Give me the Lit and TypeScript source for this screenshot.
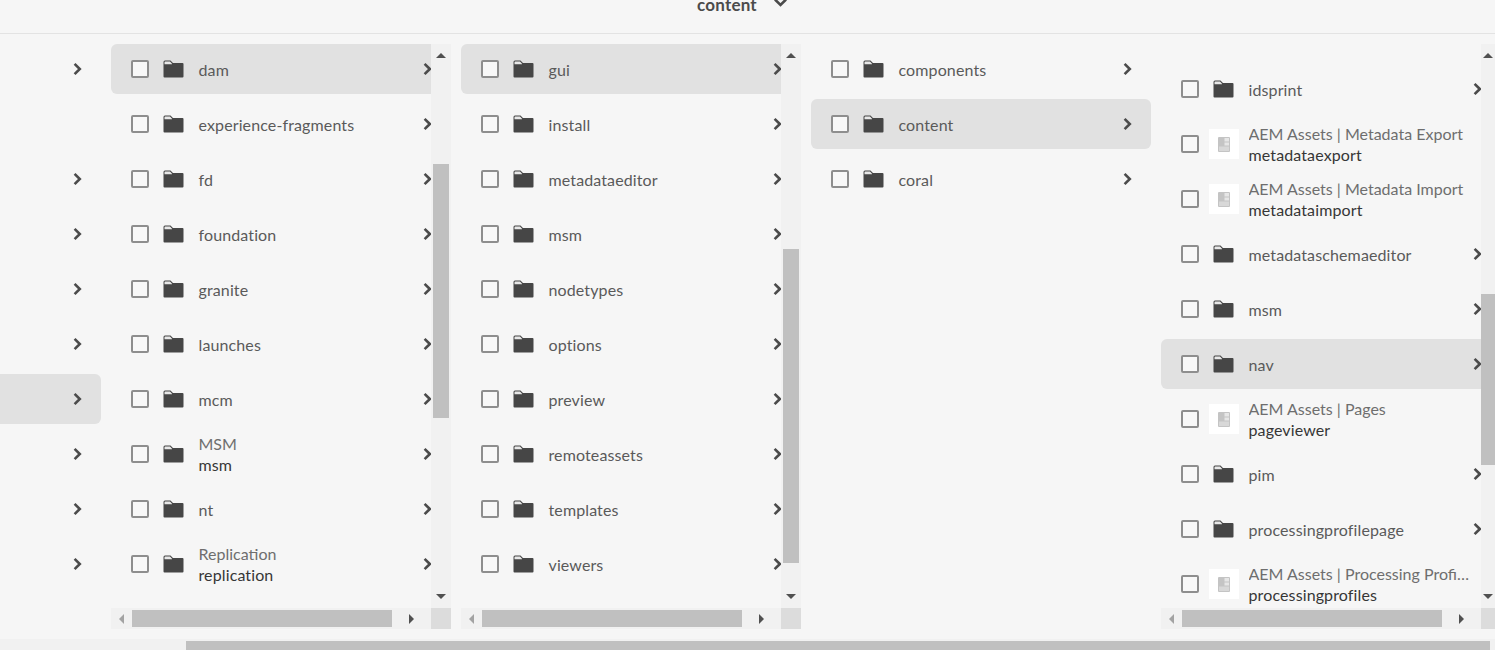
import { LitElement, html, css, svg } from "lit";
import { customElement } from "lit/decorators.js";

type Item = { title?: string; name: string; page?: boolean; sel?: boolean; more?: boolean };
const f = (name: string, more = true, sel = false, title?: string): Item => ({ name, more, sel, title });
const p = (title: string, name: string): Item => ({ title, name, page: true, more: false });

type Col = { items: Item[]; cls: string; thumbTop?: number; thumbH?: number; scroll?: boolean; top?: number };

const cols: Col[] = [
  {
    cls: "lead",
    items: ["a", "", "b", "c", "d", "e", "f", "g", "h", "i"].map((n, i) => ({ name: "", more: n !== "", sel: i === 6, blank: true } as any)),
  },
  {
    cls: "", scroll: true, thumbTop: 120, thumbH: 254,
    items: [f("dam", true, true), f("experience-fragments"), f("fd"), f("foundation"), f("granite"), f("launches"), f("mcm"), f("msm", true, false, "MSM"), f("nt"), f("replication", true, false, "Replication")],
  },
  {
    cls: "", scroll: true, thumbTop: 205, thumbH: 314,
    items: [f("gui", true, true), f("install"), f("metadataeditor"), f("msm"), f("nodetypes"), f("options"), f("preview"), f("remoteassets"), f("templates"), f("viewers")],
  },
  { cls: "", items: [f("components"), f("content", true, true), f("coral")] },
  {
    cls: "last", scroll: true, thumbTop: 250, thumbH: 171, top: 20,
    items: [f("idsprint"), p("AEM Assets | Metadata Export", "metadataexport"), p("AEM Assets | Metadata Import", "metadataimport"), f("metadataschemaeditor"), f("msm"), f("nav", true, true), p("AEM Assets | Pages", "pageviewer"), f("pim"), f("processingprofilepage"), p("AEM Assets | Processing Profiles", "processingprofiles")],
  },
];

const chevron = svg`<svg class="chev" width="9" height="14" viewBox="0 0 9 14"><path d="M1.6 1.8 L6.8 7 L1.6 12.2" fill="none" stroke="#4b4b4b" stroke-width="2.6"/></svg>`;
const folder = svg`<svg class="folder" width="21" height="18" viewBox="0 0 21 18"><path d="M0.5 2 a1.5 1.5 0 0 1 1.5-1.5 H7.5 L10 3 H19.5 a1 1 0 0 1 1 1 V16.5 a1 1 0 0 1-1 1 H1.5 a1 1 0 0 1-1-1 Z" fill="#464646"/><path d="M1.5 4.2 V2.2 a.8 .8 0 0 1 .8-.8 H7 L9 3.8 L9 4.2 Z" fill="#e8e8e8"/></svg>`;
const pageIcon = svg`<svg width="12" height="15" viewBox="0 0 12 15"><rect width="12" height="15" rx="1" fill="#c4c4c4"/><rect x="6.5" y="1" width="4.5" height="3.5" fill="#e6e6e6"/><rect x="6.5" y="5.5" width="4.5" height="3" fill="#e6e6e6"/><rect x="1" y="9.5" width="10" height="4.5" fill="#d8d8d8"/></svg>`;

@customElement("app-root")
export class AppRoot extends LitElement {
  static styles = css`
    :host { display: flex; flex-direction: column; height: 650px; overflow: hidden; background: #f6f6f6; font-family: "Lato", "Noto Sans", sans-serif; font-size: 16px; color: #505050; }
    .head { height: 33px; border-bottom: 1px solid #e3e3e3; flex: none; display: flex; justify-content: center; gap: 17px; align-items: flex-start; padding-right: 11px; overflow: hidden; box-sizing: content-box; }
    .head b { font-weight: 700; font-size: 17px; letter-spacing: 0.2px; color: #4b4b4b; line-height: 20px; margin-top: -5px; }
    .head svg { margin-top: -2px; }
    .cols { display: flex; gap: 10px; padding-top: 10px; height: 605px; flex: none; box-sizing: border-box; overflow: hidden; }
    .col { width: 340px; flex: none; height: 585px; display: flex; flex-direction: column; position: relative; }
    .col.lead { width: 101px; align-items: flex-end; }
    .col.last { width: 334px; }
    .body { display: flex; height: 564px; flex: none; }
    .list { flex: 1; min-width: 0; overflow: hidden; }
    .row { width: 340px; height: 50px; margin-bottom: 5px; display: flex; align-items: center; border-radius: 6px; padding-left: 20px; box-sizing: border-box; position: relative; }
    .lead .row { margin-left: -239px; }
    .row.sel { background: #e1e1e1; }
    .cb { width: 18px; height: 18px; border: 2px solid #8e8e8e; border-radius: 2px; background: #f8f8f8; box-sizing: border-box; flex: none; }
    .ic { width: 30px; height: 30px; margin-left: 10px; flex: none; display: flex; align-items: center; justify-content: center; }
    .ic.page { background: #fff; }
    .ic.fold { margin-left: 14px; width: 21px; margin-right: 0; }
    .txt { margin-left: 9.5px; width: 221px; line-height: 21px; min-width: 0; }
    .ic.fold + .txt { margin-left: 14.5px; }
    .t1 { white-space: nowrap; overflow: hidden; text-overflow: ellipsis; color: #6e6e6e; }
    .t2 { white-space: nowrap; color: #363636; letter-spacing: 0.12px; }
    .single { color: #5a5a5a; letter-spacing: 0.12px; }
    .chev { position: absolute; left: 312px; top: 18px; }
    .vbar { width: 20px; flex: none; background: #f1f1f1; display: flex; flex-direction: column; align-items: center; }
    .last .vbar { width: 14px; }
    .up, .down { height: 20px; flex: none; display: flex; align-items: center; justify-content: center; }
    .up { padding-top: 2px; box-sizing: border-box; }
    .down { margin-top: auto; height: 24px; }
    .up i { border: 5px solid transparent; border-top: 0; border-bottom: 5px solid #505050; display: block; }
    .down i { border: 5px solid transparent; border-bottom: 0; border-top: 5px solid #505050; display: block; }
    .thumb { width: 16px; background: #c0c0c0; flex: none; }
    .last .thumb { width: 14px; }
    .hrow { display: flex; height: 21px; flex: none; }
    .hbar { width: 320px; background: #f1f1f1; display: flex; align-items: center; flex: none; }
    .corner { width: 20px; background: #dcdcdc; flex: none; }
    .hthumb { width: 260px; height: 17px; background: #c0c0c0; flex: none; }
    .al, .ar { width: 21px; display: flex; justify-content: center; flex: none; }
    .ar { width: 39px; }
    .al i { border: 5px solid transparent; border-left: 0; border-right: 5px solid #a3a3a3; display: block; }
    .ar i { border: 5px solid transparent; border-right: 0; border-left: 5px solid #505050; display: block; }
    .page-bar { background: #f1f1f1; flex: none; padding: 2px 5px 0 186px; box-sizing: border-box; height: 11px; }
    .page-bar div { height: 9px; background: #c0c0c0; }
  `;

  private row(it: any) {
    return html`<div class="row ${it.sel ? "sel" : ""}">
      ${it.blank ? "" : html`<div class="cb"></div>
      ${it.page ? html`<div class="ic page">${pageIcon}</div>` : html`<div class="ic fold">${folder}</div>`}
      <div class="txt">
        ${it.title ? html`<div class="t1">${it.title}</div><div class="t2">${it.name}</div>` : html`<div class="single">${it.name}</div>`}
      </div>`}
      ${it.more ? chevron : ""}
    </div>`;
  }

  private col(c: Col) {
    return html`<div class="col ${c.cls}">
      <div class="body">
        <div class="list" style=${c.top ? `padding-top:${c.top}px` : ""}>${c.items.map((i) => this.row(i))}</div>
        ${c.scroll ? html`<div class="vbar">
          <div class="up"><i></i></div>
          <div class="thumb" style="margin-top:${(c.thumbTop ?? 0) - 20}px;height:${c.thumbH}px"></div>
          <div class="down"><i></i></div>
        </div>` : ""}
      </div>
      ${c.scroll ? html`<div class="hrow">
        <div class="hbar"><div class="al"><i></i></div><div class="hthumb"></div><div class="ar"><i></i></div></div>
        <div class="corner"></div>
      </div>` : ""}
    </div>`;
  }

  render() {
    return html`
      <div class="head"><b>content</b>
        <svg width="13" height="10" viewBox="0 0 13 10"><path d="M1 1.5 L6.5 7 L12 1.5" fill="none" stroke="#4b4b4b" stroke-width="2.6"/></svg>
      </div>
      <div class="cols">${cols.map((c) => this.col(c))}</div>
      <div class="page-bar"><div></div></div>
    `;
  }
}
